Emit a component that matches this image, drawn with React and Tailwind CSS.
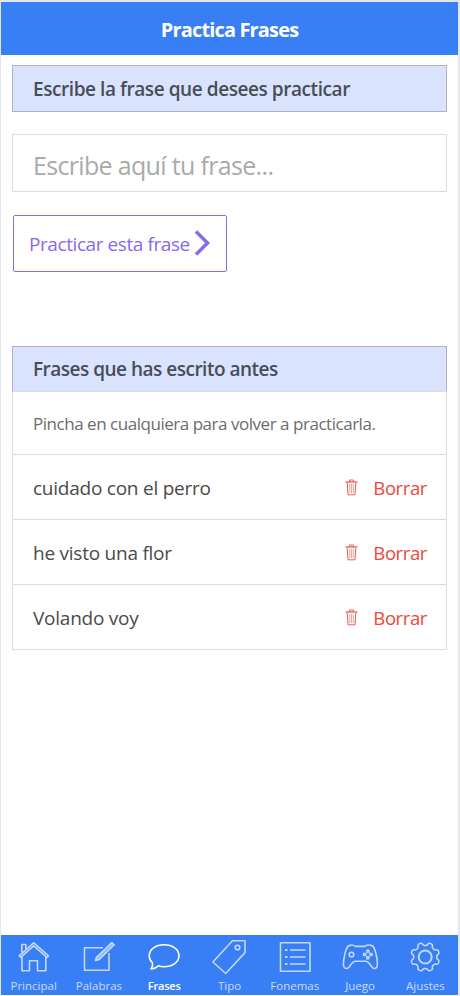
const stroke = { fill: "none", stroke: "currentColor", strokeWidth: 1.6, strokeLinejoin: "round" };

function Icon({ children }) {
  return (
    <svg width="36" height="36" viewBox="-1 0 36 36" {...stroke}>
      {children}
    </svg>
  );
}

function gearPath() {
  const pts = [];
  for (let i = 0; i <= 160; i++) {
    const a = (i / 160) * Math.PI * 2;
    const w = Math.cos(8 * a - Math.PI);
    const r = 13 + 1.5 * Math.tanh(2 * w);
    pts.push((17.2 + r * Math.cos(a)).toFixed(2) + " " + (18 + r * Math.sin(a)).toFixed(2));
  }
  return "M" + pts.join("L") + "Z";
}

const tabs = [
  { label: "Principal", icon: (
    <Icon>
      <path d="M2.2 16.8 16.7 3.8 31.5 16.8 30 18.4 16.7 6.8 3.7 18.4Z" />
      <path d="M4.8 13.6V5.5H8.8V10M5 18V31.8H12.500V21.8H20.500V31.8H28.800V18" />
    </Icon>) },
  { label: "Palabras", icon: (
    <Icon>
      <path d="M21 8.7H2.500V31.300H27V14" />
      <path d="M29.800 3.600 32.200 5.800 17 20.600 13.500 21.500 14.400 18.600Z" fill="currentColor" fillOpacity=".6" />
    </Icon>) },
  { label: "Frases", active: true, icon: (
    <Icon>
      <path d="M17.200 5.800C25.500 5.800 32 10.500 32 16.800S25.500 27.800 17.200 27.800C14.700 27.800 12.800 27.400 11.300 26.800C9.500 28.600 7 29.900 4 30C5.200 28 5.800 26.500 5.600 24C3.400 22 2.200 19.600 2.200 16.800C2.200 10.500 8.700 5.800 17.200 5.800Z" />
    </Icon>) },
  { label: "Tipo", icon: (
    <Icon>
      <path d="M20.500 1.800H33V13.600L13.700 34.500 .9 23Z" />
      <circle cx="25.500" cy="8.500" r="2.300" />
    </Icon>) },
  { label: "Fonemas", icon: (
    <Icon>
      <path d="M2.500 3.700H32V32.300H2.500ZM12 11H27.500M12 18H27.500M12 25H27.500" />
      <path d="M7 11H9.500M7 18H9.500M7 25H9.500" strokeWidth="2.200" />
    </Icon>) },
  { label: "Juego", icon: (
    <Icon>
      <path d="M5.500 7C7.500 5.700 10.500 6 12.500 7.400H22C24 6 27 5.700 29.500 7C32.500 9 34.400 20.500 34.400 25.500C34.400 29 32 30.500 29.500 28.700C27.500 27 26.500 23 23 22.300H12C8.500 23 7.500 27 5.500 28.700C3 30.500 .4 29 .4 25.500C.4 20.500 2.500 9 5.500 7Z" />
      <circle cx="8.500" cy="15.500" r="2.300" />
      <circle cx="24.800" cy="12.300" r="1.200" />
      <circle cx="24.800" cy="18.700" r="1.200" />
      <circle cx="21.600" cy="15.500" r="1.200" />
      <circle cx="28" cy="15.500" r="1.200" />
    </Icon>) },
  { label: "Ajustes", icon: (
    <Icon>
      <path d={gearPath()} />
      <circle cx="17.200" cy="18" r="6.500" strokeWidth="2" />
    </Icon>) },
];

function Trash() {
  return (
    <svg width="13" height="17" viewBox="0 0 13 17" fill="none" stroke="currentColor" className="mb-0.5">
      <path d="M.5 3H12.500" strokeWidth="1.200" />
      <path d="M4.500 2.500V1H8.500V2.500M2.200 4 3 15.800H10L10.800 4" strokeWidth=".9" />
      <path d="M4.700 5V14M6.500 5V14M8.300 5V14" strokeWidth=".5" />
    </svg>
  );
}

const phrases = ["cuidado con el perro", "he visto una flor", "Volando voy"];

export default function App() {
  return (
    <div className="flex h-[996px] w-[460px] flex-col border-t-2 border-r-2 border-l border-[#e6e6ea] bg-white font-['Open_Sans','Noto_Sans',sans-serif] text-[#4a4a4a]">
      <header className="flex h-[53px] shrink-0 items-center justify-center bg-[#387ef5] pt-0.5 text-[20px] font-bold tracking-[-0.85px] text-white">
        <h1>Practica Frases</h1>
      </header>
      <main className="flex-1 px-[11px] pt-[10px]">
        <h2 className="flex h-[47px] w-[435px] items-center border border-[#b2b2bd] bg-[#d9e3fd] pt-0.5 pl-5 text-[19px] font-semibold tracking-[-0.43px] text-[#484d58]">
          Escribe la frase que desees practicar
        </h2>
        <input
          className="mt-[22px] block h-[58px] w-[435px] border border-[#ddd] pt-1 pl-5 text-[25px] tracking-[-0.67px] placeholder:text-[#aaa]"
          placeholder="Escribe aquí tu frase..."
        />
        <button className="mt-[23px] ml-px flex h-[57px] w-[214px] items-center rounded-[2px] border border-[#886aea] pl-[15px] text-[19px] whitespace-nowrap text-[#886aea]">
          <span className="w-[165px] pt-0.5 text-left tracking-[-0.42px]">Practicar esta frase</span>
          <svg width="17" height="26" viewBox="0 0 17 26" fill="none" stroke="currentColor" strokeWidth="3.500" className="mb-0.5">
            <path d="M2 1.500 13.500 13 2 24.500" />
          </svg>
        </button>
        <section className="mt-[74px] w-[435px] border border-[#ddd]">
          <h2 className="-mx-px -mt-px flex h-[46px] items-center border border-b-[#ddd] border-[#b2b2bd] bg-[#d9e3fd] pt-px pl-5 text-[19px] font-semibold tracking-[-0.5px] text-[#484d58]">
            Frases que has escrito antes
          </h2>
          <p className="flex h-[62px] items-center pt-0.5 pl-5 text-[17px] tracking-[-0.47px] text-[#6c6c6c]">
            Pincha en cualquiera para volver a practicarla.
          </p>
          {phrases.map((phrase) => (
            <div key={phrase} className="flex h-[65px] items-center border-t border-[#ddd] pt-0.5 pr-[19px] pl-5 text-[19px]">
              <span className="flex-1 tracking-[-0.24px]">{phrase}</span>
              <button className="flex items-center gap-[15px] text-[#ef473a]">
                <Trash />
                <span className="text-[18.5px] tracking-[-0.4px]">Borrar</span>
              </button>
            </div>
          ))}
        </section>
      </main>
      <nav className="mb-px grid h-[60px] shrink-0 grid-cols-7 bg-[#387ef5] text-white">
        {tabs.map((tab) => (
          <a key={tab.label} className={tab.active ? "flex flex-col items-center pt-1" : "flex flex-col items-center pt-1 opacity-70"}>
            {tab.icon}
            <span className={tab.active ? "mt-[3px] text-[11px] leading-4 font-semibold tracking-[-0.2px]" : "mt-[3px] text-[11.5px] leading-4"}>{tab.label}</span>
          </a>
        ))}
      </nav>
    </div>
  );
}
